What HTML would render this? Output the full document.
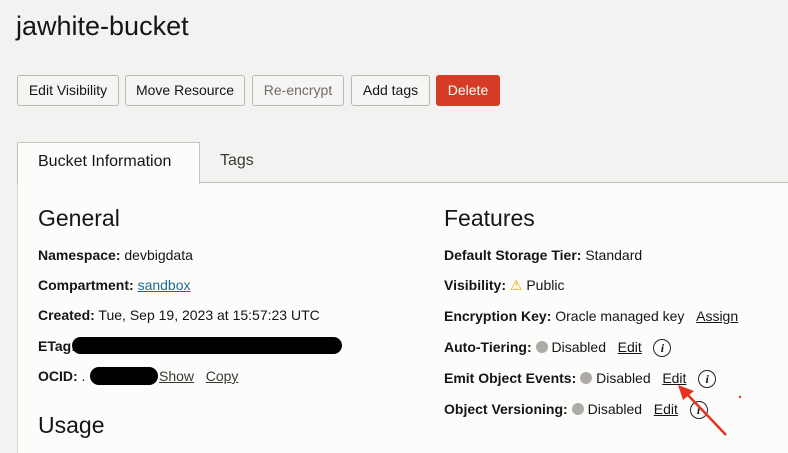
<!DOCTYPE html><html><head><style>
body{margin:0;width:788px;height:452px;overflow:hidden;background:#f3f2f0;font-family:"Liberation Sans",sans-serif;color:#161513;position:relative}
.a{position:absolute;white-space:nowrap}
.btn{position:absolute;top:75px;height:29px;border:1px solid #b9b7b3;border-radius:3px;background:#f6f5f3;font-size:14px;line-height:29px;text-align:center;box-sizing:content-box}
.r{position:absolute;font-size:14px;white-space:nowrap;line-height:16px}
.r b{font-weight:bold}
u{text-decoration:underline}
.dot{display:inline-block;width:12px;height:12px;border-radius:50%;background:#aeaaa5;vertical-align:-1px;margin-right:4px}
.i{display:inline-block;width:16px;height:16px;border:1.5px solid #222;border-radius:50%;text-align:center;font:italic bold 12px/16px "Liberation Serif",serif;vertical-align:baseline}
</style></head><body>
<div class="a" style="left:16px;top:11px;font-size:27px">jawhite-bucket</div>
<div class="btn" style="left:17px;width:100px">Edit Visibility</div>
<div class="btn" style="left:125px;width:118px">Move Resource</div>
<div class="btn" style="left:252px;width:90px;color:#6f6c69">Re-encrypt</div>
<div class="btn" style="left:351px;width:77px">Add tags</div>
<div class="btn" style="left:436px;width:62px;background:#d63b25;border-color:#d63b25;color:#fff">Delete</div>
<div class="a" style="left:17px;top:182px;width:771px;height:270px;background:#fcfcfb;border-top:1px solid #bdbbb8;border-left:1px solid #d8d6d3"></div>
<div class="a" style="left:17px;top:142px;width:181px;height:41px;background:#fcfcfb;border:1px solid #c6c4c0;border-bottom:none"></div>
<div class="a" style="left:38px;top:153px;font-size:16px">Bucket Information</div>
<div class="a" style="left:220px;top:152px;font-size:16px;color:#3b3936">Tags</div>
<div class="a" style="left:38px;top:205px;font-size:23px">General</div>
<div class="a" style="left:38px;top:412px;font-size:23px">Usage</div>
<div class="a" style="left:444px;top:205px;font-size:23px">Features</div>
<div class="r" style="left:38px;top:247px"><b>Namespace:</b> devbigdata</div>
<div class="r" style="left:38px;top:277px"><b>Compartment:</b> <u style="color:#1a6d93">sandbox</u></div>
<div class="r" style="left:38px;top:307px"><b>Created:</b> Tue, Sep 19, 2023 at 15:57:23 UTC</div>
<div class="r" style="left:38px;top:338px"><b>ETag:</b></div>
<div class="a" style="left:72px;top:337px;width:270px;height:17px;background:#000;border-radius:9px"></div>
<div class="r" style="left:38px;top:368px"><b>OCID:</b> .</div>
<div class="a" style="left:90px;top:367px;width:68px;height:18px;background:#000;border-radius:9px"></div>
<div class="r" style="left:159px;top:368px;color:#3b3936"><u>Show</u> &nbsp; <u>Copy</u></div>
<div class="r" style="left:444px;top:247px"><b>Default Storage Tier:</b> Standard</div>
<div class="r" style="left:444px;top:277px"><b>Visibility:</b> <span style="color:#f0a30a">&#9888;</span> Public</div>
<div class="r" style="left:444px;top:308px"><b>Encryption Key:</b> Oracle managed key &nbsp;&nbsp;<u>Assign</u></div>
<div class="r" style="left:444px;top:339px"><b>Auto-Tiering:</b> <span class="dot"></span>Disabled &nbsp; <u>Edit</u> &nbsp;&nbsp;<span class="i">i</span></div>
<div class="r" style="left:444px;top:370px"><b>Emit Object Events:</b> <span class="dot"></span>Disabled &nbsp; <u>Edit</u> &nbsp;&nbsp;<span class="i">i</span></div>
<div class="r" style="left:444px;top:401px"><b>Object Versioning:</b> <span class="dot"></span>Disabled &nbsp; <u>Edit</u> &nbsp;&nbsp;<span class="i">i</span></div>
<svg class="a" style="left:670px;top:380px" width="80" height="60"><line x1="56" y1="55" x2="16" y2="13" stroke="#e8321e" stroke-width="2.5"/><polygon points="8,5 24,11 13,20" fill="#e8321e"/><circle cx="70" cy="17" r="1.2" fill="#e8321e"/></svg>
</body></html>
